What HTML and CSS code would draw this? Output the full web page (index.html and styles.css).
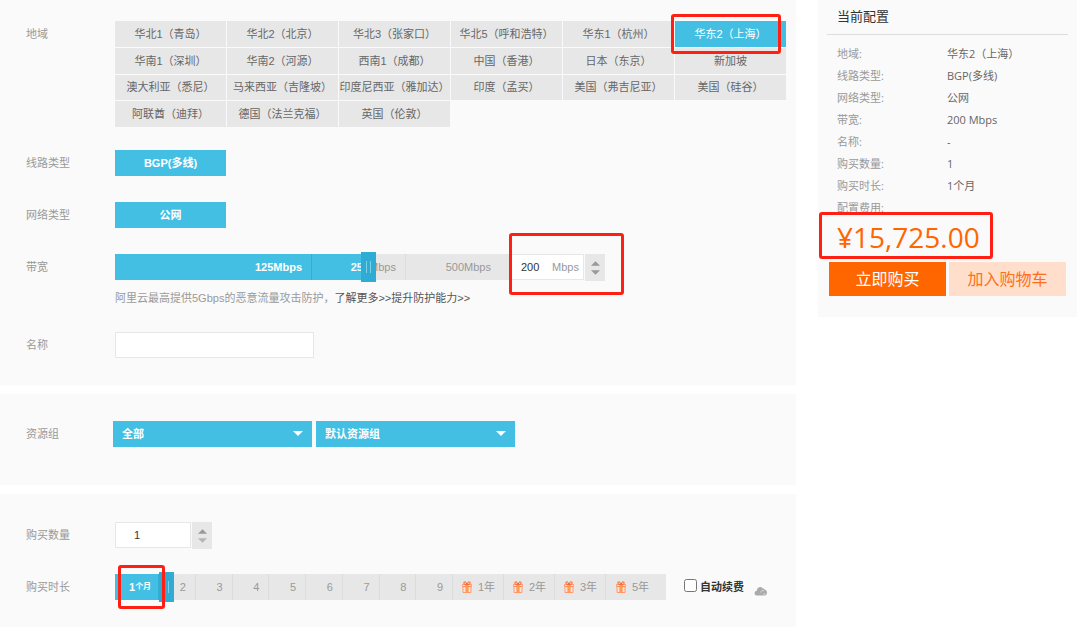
FILE: index.html
```html
<!DOCTYPE html>
<html lang="zh-CN">
<head>
<meta charset="utf-8">
<title>当前配置</title>
<link rel="stylesheet" href="styles.css">
</head>
<body>
<svg class="defs" aria-hidden="true">
  <symbol id="gift" viewBox="0 0 10 12">
    <path d="M0.5 3.5h9v2h-9zM1 5.500h8v6h-8z" fill="#fbe3d8" stroke="#ff8a5c" stroke-width="0.8"/>
    <path d="M3.600 3.500h2.800v8H3.600z" fill="#ff7a1a"/>
    <path d="M5 3.500L3.600 0.800 1.800 1.200 2.200 3.200zM5 3.500L6.400 0.800 8.200 1.200 7.800 3.200z" fill="none" stroke="#ff6a33" stroke-width="1"/>
    <path d="M5 4v7.500" stroke="#fbd0b4" stroke-width="0.8"/>
  </symbol>
  <symbol id="up" viewBox="0 0 10 5"><path d="M5 0L10 5H0z" fill="currentColor"/></symbol>
  <symbol id="down" viewBox="0 0 10 5"><path d="M0 0H10L5 5z" fill="currentColor"/></symbol>
</svg>
<div class="page">
  <main class="main">
    <section class="panel">
      <div class="row row-region">
        <span class="label">地域</span>
        <div class="regions">
          <button class="region">华北1（青岛）</button>
          <button class="region">华北2（北京）</button>
          <button class="region">华北3（张家口）</button>
          <button class="region">华北5（呼和浩特）</button>
          <button class="region">华东1（杭州）</button>
          <button class="region selected">华东2（上海）<i class="mark mark-region"></i></button>
          <button class="region">华南1（深圳）</button>
          <button class="region">华南2（河源）</button>
          <button class="region">西南1（成都）</button>
          <button class="region">中国（香港）</button>
          <button class="region">日本（东京）</button>
          <button class="region">新加坡</button>
          <button class="region">澳大利亚（悉尼）</button>
          <button class="region">马来西亚（吉隆坡）</button>
          <button class="region">印度尼西亚（雅加达）</button>
          <button class="region">印度（孟买）</button>
          <button class="region">美国（弗吉尼亚）</button>
          <button class="region">美国（硅谷）</button>
          <button class="region">阿联酋（迪拜）</button>
          <button class="region">德国（法兰克福）</button>
          <button class="region">英国（伦敦）</button>
        </div>
      </div>
      <div class="row">
        <span class="label">线路类型</span>
        <button class="choice">BGP(多线)</button>
      </div>
      <div class="row">
        <span class="label">网络类型</span>
        <button class="choice">公网</button>
      </div>
      <div class="row row-hinted">
        <label class="label" for="bandwidth">带宽</label>
        <div class="stack">
          <div class="controls">
            <div class="track track-bandwidth">
              <span class="seg on">125Mbps</span>
              <span class="seg half"><b>250</b>Mbps</span>
              <span class="seg">500Mbps</span>
              <input class="range" type="range" min="0" max="1000" value="646" aria-label="带宽">
            </div>
            <div class="amount">
              <div class="unit-box">
                <input id="bandwidth" class="unit-input" type="text" value="200">
                <span class="unit">Mbps</span>
              </div>
              <div class="stepper">
                <button class="step" aria-label="增加带宽"><svg class="tri"><use href="#up"/></svg></button>
                <button class="step" aria-label="减少带宽"><svg class="tri"><use href="#down"/></svg></button>
              </div>
              <i class="mark mark-amount"></i>
            </div>
          </div>
          <p class="hint">阿里云最高提供5Gbps的恶意流量攻击防护，<a class="link" href="#">了解更多&gt;&gt;</a><a class="link" href="#">提升防护能力&gt;&gt;</a></p>
        </div>
      </div>
      <div class="row">
        <label class="label" for="name">名称</label>
        <input id="name" class="text-input" type="text">
      </div>
    </section>

    <section class="panel panel-group">
      <div class="row">
        <label class="label label-short" for="group">资源组</label>
        <div class="selects">
          <div class="select-wrap"><select id="group" class="select"><option>全部</option></select></div>
          <div class="select-wrap"><select class="select" aria-label="默认资源组"><option>默认资源组</option></select></div>
        </div>
      </div>
    </section>

    <section class="panel panel-buy">
      <div class="row">
        <label class="label" for="count">购买数量</label>
        <div class="count">
          <input id="count" class="count-input" type="text" value="1">
          <div class="stepper">
            <button class="step" aria-label="增加数量"><svg class="tri"><use href="#up"/></svg></button>
            <button class="step muted" aria-label="减少数量"><svg class="tri"><use href="#down"/></svg></button>
          </div>
        </div>
      </div>
      <div class="row">
        <span class="label">购买时长</span>
        <div class="track track-time">
          <span class="seg on first">1<small class="month">个月</small></span>
          <span class="seg">2</span>
          <span class="seg">3</span>
          <span class="seg">4</span>
          <span class="seg">5</span>
          <span class="seg">6</span>
          <span class="seg">7</span>
          <span class="seg">8</span>
          <span class="seg">9</span>
          <span class="seg year"><svg class="gift"><use href="#gift"/></svg>1年</span>
          <span class="seg year"><svg class="gift"><use href="#gift"/></svg>2年</span>
          <span class="seg year"><svg class="gift"><use href="#gift"/></svg>3年</span>
          <span class="seg year"><svg class="gift"><use href="#gift"/></svg>5年</span>
          <input class="range" type="range" min="0" max="1000" value="82" aria-label="购买时长">
          <i class="mark mark-month"></i>
        </div>
        <div class="renew">
          <input id="renew" class="check" type="checkbox">
          <label class="renew-label" for="renew">自动续费</label>
          <svg class="cloud" viewBox="0 0 14 10" aria-hidden="true">
            <path d="M3 9.500a2.400 2.400 0 0 1-.2-4.800A3.400 3.400 0 0 1 9 2.600a3 3 0 0 1 1.700 1A3.100 3.100 0 0 1 11 9.500z" fill="#aaa"/>
            <path d="M7 6.500a2 2 0 0 1 3-1.800M9.500 9l1.500-2" fill="none" stroke="#e8e8e8" stroke-width="0.8"/>
          </svg>
        </div>
      </div>
    </section>
  </main>

  <aside class="summary">
    <h2 class="summary-title">当前配置</h2>
    <dl class="facts">
      <dt>地域:</dt><dd>华东2（上海）</dd>
      <dt>线路类型:</dt><dd>BGP(多线)</dd>
      <dt>网络类型:</dt><dd>公网</dd>
      <dt>带宽:</dt><dd>200 Mbps</dd>
      <dt>名称:</dt><dd>-</dd>
      <dt>购买数量:</dt><dd>1</dd>
      <dt>购买时长:</dt><dd>1个月</dd>
      <dt>配置费用:</dt><dd></dd>
    </dl>
    <div class="price">¥15,725.00</div>
    <div class="actions">
      <button class="buy">立即购买</button>
      <button class="buy cart">加入购物车</button>
    </div>
  </aside>
</div>
</body>
</html>
```
FILE: styles.css
```css
* { box-sizing: border-box; }

body {
  margin: 0;
  background: #fff;
  color: #666;
  font: 11px/16px "Liberation Sans", "Noto Sans CJK SC", sans-serif;
}

button, input, select {
  margin: 0;
  padding: 0;
  border: 0;
  border-radius: 0;
  font: inherit;
  color: inherit;
}

button { cursor: pointer; }

.defs { position: absolute; width: 0; height: 0; }

.page {
  display: flex;
  align-items: flex-start;
  gap: 22px;
  padding-right: 3px;
}

.main {
  flex: 1;
  display: flex;
  flex-direction: column;
  gap: 9px;
}

.panel {
  display: flex;
  flex-direction: column;
  gap: 26px;
  padding: 21px 10px 27px 26px;
  background: #fafafa;
}

.panel-group { padding-top: 27px; padding-bottom: 38px; }
.panel-buy { padding-top: 28px; }

.row { display: flex; align-items: flex-start; }
.row-region { margin-bottom: -3px; }

.label {
  flex: none;
  width: 89px;
  line-height: 26px;
  color: #999;
}

.label-short { width: 87px; }

/* Region grid */
.regions {
  flex: 1;
  display: grid;
  grid-template-columns: repeat(6, 1fr);
  grid-auto-rows: 1fr;
  gap: 1px;
  height: 106px;
}

.region {
  background: #e7e7e7;
  white-space: nowrap;
}

.region.selected {
  position: relative;
  background: #44bfe4;
  color: #fff;
}

.choice {
  width: 111px;
  height: 26px;
  background: #44bfe4;
  color: #fff;
  font-weight: bold;
}

/* Highlight frames drawn over the controls */
.mark {
  position: absolute;
  border: 3px solid #ff2014;
  border-radius: 3px;
  pointer-events: none;
}

.mark-region { inset: -7px 5px -7px -4px; }
.mark-amount { inset: -21px -19px -15px -2px; }
.mark-month { top: -9px; left: 3px; width: 47px; height: 44px; }

/* Sliders */
.controls { display: flex; height: 26px; }

.track {
  position: relative;
  display: grid;
  height: 26px;
  color: #999;
}

.track-bandwidth { grid-template-columns: 197px 94px 105px; }
.track-time { grid-template-columns: 44px repeat(8, 1fr) repeat(3, 51px) 60px; width: 551px; }

.seg {
  display: flex;
  align-items: center;
  justify-content: flex-end;
  padding-right: 9px;
  border-right: 1px solid #dcdcdc;
  background: #e7e7e7;
}

.seg.on {
  background: #44bfe4;
  border-color: #35aed6;
  color: #fff;
  font-weight: bold;
}

.seg.half { background: linear-gradient(90deg, #44bfe4 54px, #e7e7e7 54px); }
.half b { color: #fff; }
.track-bandwidth .seg:nth-child(3) { padding-right: 20px; border: 0; }

.seg.first { justify-content: flex-start; padding: 0 0 0 14px; }
.month { font-size: 8px; }
.year { justify-content: flex-start; gap: 6px; padding: 0 0 0 9px; }
.track-time .year:nth-child(13) { padding-left: 10px; border: 0; }
.gift { width: 10px; height: 12px; }

.range {
  position: absolute;
  top: -2px;
  left: 0;
  width: 100%;
  height: 30px;
  background: none;
  appearance: none;
}

.range::-webkit-slider-thumb {
  appearance: none;
  width: 15px;
  height: 30px;
  background:
    linear-gradient(#7fd0ea, #7fd0ea) 5px 9px / 1px 12px no-repeat,
    linear-gradient(#7fd0ea, #7fd0ea) 9px 9px / 1px 12px no-repeat,
    #2eacd4;
}

/* Number fields */
.amount { position: relative; display: flex; gap: 1px; }

.unit-box {
  display: flex;
  align-items: center;
  width: 73px;
  height: 26px;
  border: 1px solid #e7e7e7;
  background: #fff;
}

.unit-input {
  width: 40px;
  padding-left: 9px;
  background: none;
  color: #333;
}

.unit { color: #999; }

.stepper {
  display: flex;
  flex-direction: column;
  width: 20px;
  height: 27px;
  background: #e7e7e7;
}

.step {
  flex: 1;
  display: flex;
  align-items: flex-end;
  justify-content: center;
  padding-bottom: 2px;
  background: none;
  color: #999;
}

.step + .step { align-items: flex-start; padding: 2px 0 0; }
.step.muted { color: #b5b5b5; }
.tri { width: 9px; height: 5px; }

.hint { margin: 10px 0 0; color: #999; }
.link { color: #555; text-decoration: none; }

.text-input {
  width: 199px;
  height: 26px;
  border: 1px solid #e7e7e7;
  background: #fff;
}

/* Drop-downs */
.selects { display: flex; gap: 4px; }
.select-wrap { position: relative; width: 199px; }

.select-wrap::after {
  content: "";
  position: absolute;
  top: 10px;
  right: 9px;
  border: solid transparent;
  border-width: 5px 5px 0;
  border-top-color: #fff;
  pointer-events: none;
}

.select {
  width: 100%;
  height: 26px;
  padding: 0 9px;
  background: #44bfe4;
  color: #fff;
  font-weight: bold;
  appearance: none;
}

.count { display: flex; gap: 1px; height: 26px; }

.count-input {
  width: 76px;
  height: 26px;
  padding-left: 18px;
  border: 1px solid #e7e7e7;
  background: #fff;
  color: #333;
}

/* Auto renewal */
.renew { display: flex; align-items: center; height: 26px; margin-left: 18px; }
.check { width: 13px; height: 13px; margin: 0 3px 4px 0; }
.renew-label { color: #333; font-weight: bold; }
.cloud { width: 14px; height: 10px; margin: 7px 0 0 10px; }

/* Summary */
.summary {
  flex: none;
  width: 259px;
  padding: 5px 9px 21px;
  background: #fafafa;
  font-family: "Open Sans", "Noto Sans CJK SC", sans-serif;
}

.summary-title {
  margin: 0;
  padding: 0 10px 7px;
  border-bottom: 1px solid #ddd;
  color: #333;
  font-size: 13px;
  font-weight: normal;
  line-height: 22px;
}

.facts {
  display: grid;
  grid-template-columns: 110px 1fr;
  grid-auto-rows: 22px;
  margin: 0;
  padding: 8px 10px 0;
  line-height: 22px;
}

.facts dt { color: #999; }
.facts dd { margin: 0; }

.price {
  position: relative;
  width: 174px;
  margin: -7px 0 3px -8px;
  padding: 4px 0 0 15px;
  border: 3px solid #ff2014;
  border-radius: 3px;
  background: #fafafa;
  color: #ff6600;
  font-size: 28px;
  line-height: 37px;
}

.actions { display: flex; gap: 3px; padding: 0 2px; }

.buy {
  flex: 1;
  height: 34px;
  background: #ff6600;
  color: #fff;
  font-size: 16px;
}

.cart { background: #ffdfcc; color: #ff6f1a; }
```
